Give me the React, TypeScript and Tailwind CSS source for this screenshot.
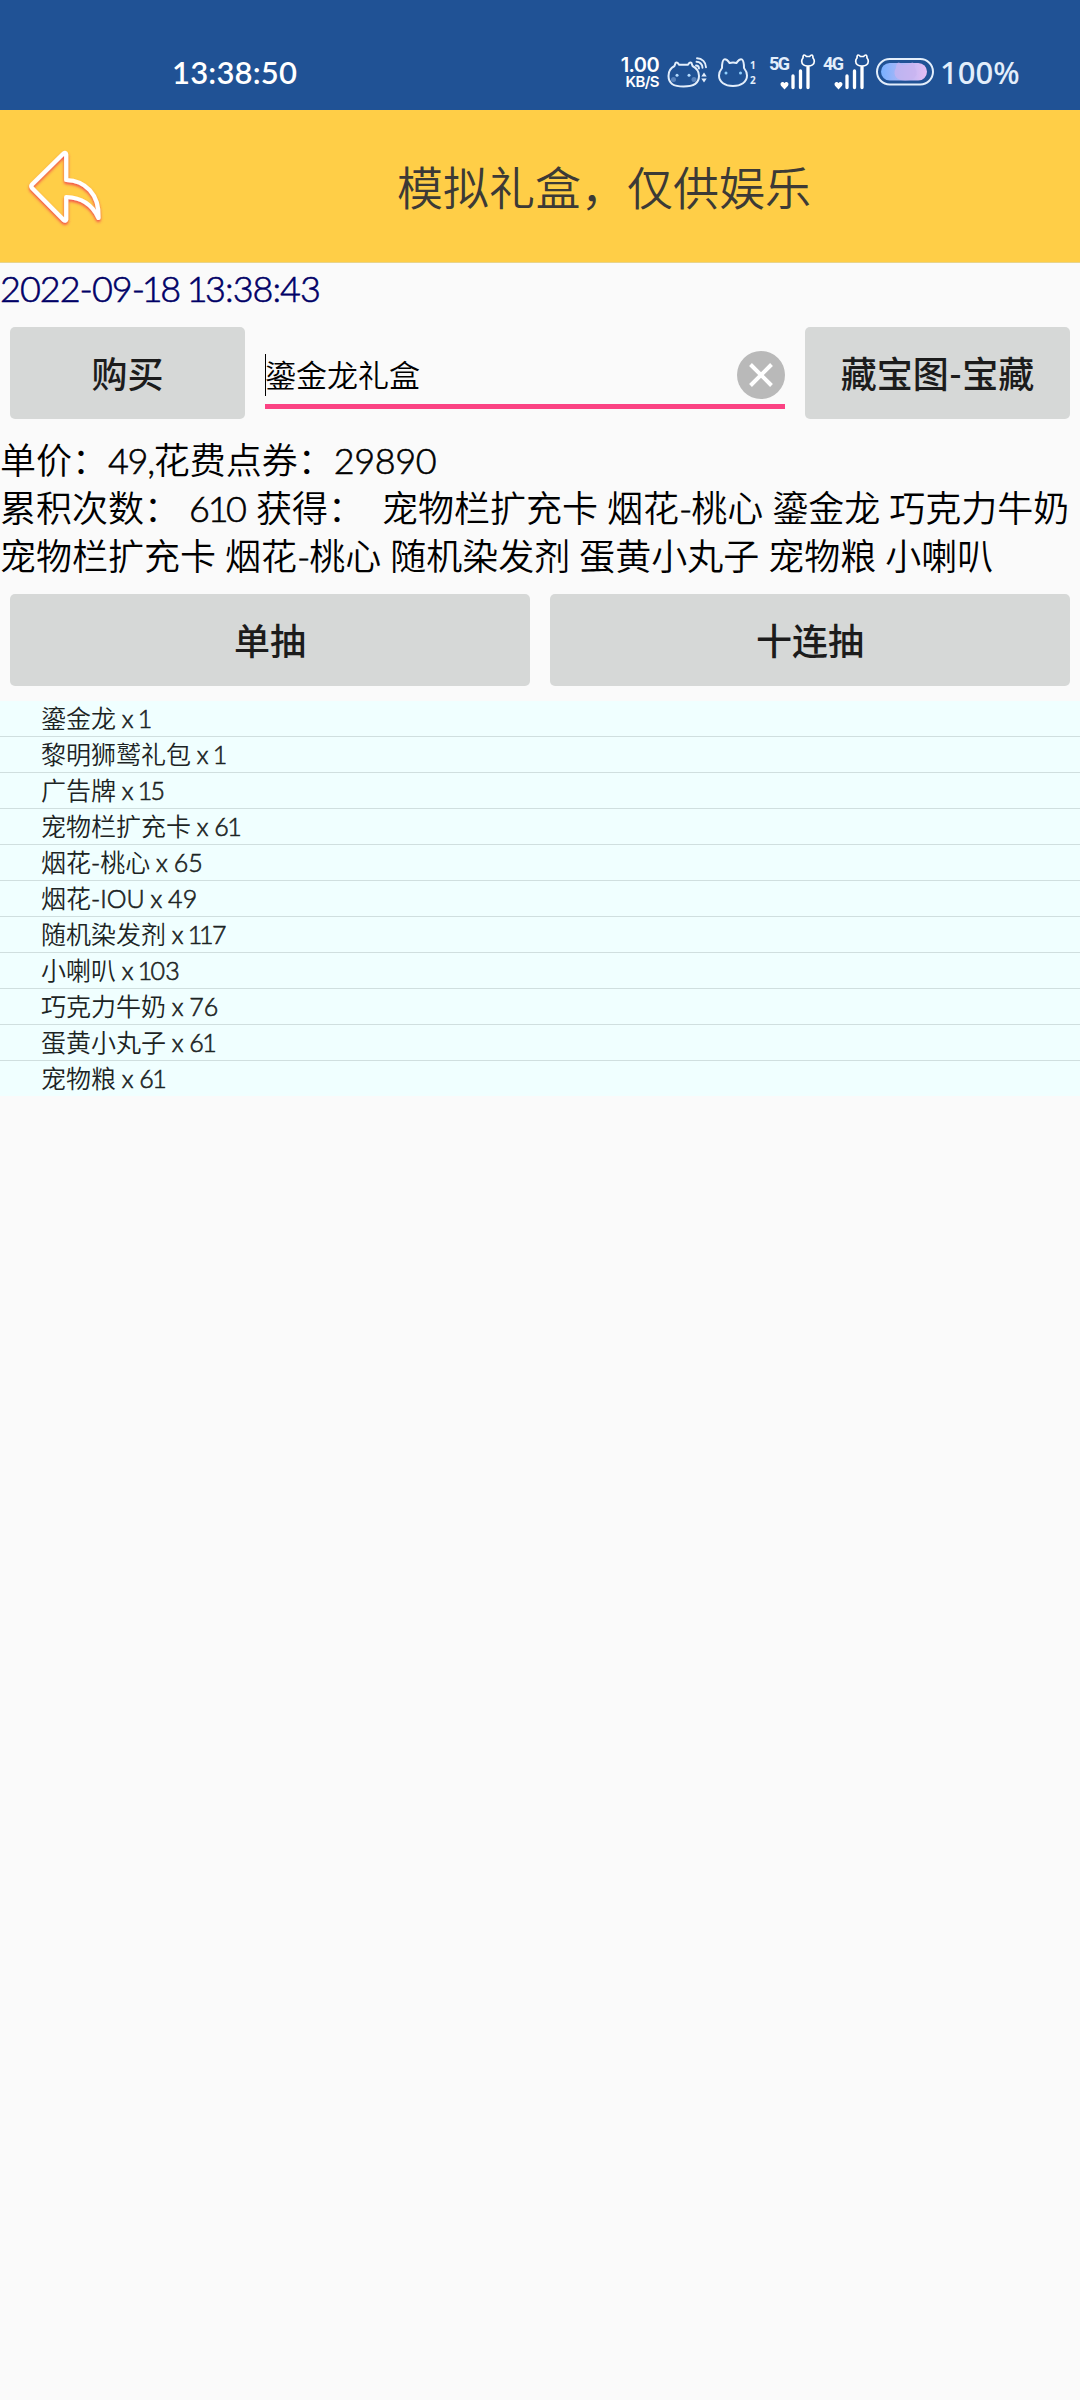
const items = [
  { name: '鎏金龙', count: 1 },
  { name: '黎明狮鹫礼包', count: 1 },
  { name: '广告牌', count: 15 },
  { name: '宠物栏扩充卡', count: 61 },
  { name: '烟花-桃心', count: 65 },
  { name: '烟花-IOU', count: 49 },
  { name: '随机染发剂', count: 117 },
  { name: '小喇叭', count: 103 },
  { name: '巧克力牛奶', count: 76 },
  { name: '蛋黄小丸子', count: 61 },
  { name: '宠物粮', count: 61 },
];

/* Sets digits proportionally: every "1" takes less room than the other figures. */
function Num({ children }: { children: string | number }) {
  return (
    <span className="[-webkit-text-stroke:0.6px]">
      {String(children)
        .split('')
        .map((char, index) =>
          char === '1' ? (
            <span key={index} className="-ml-[0.06em] tracking-[-0.07em]">1</span>
          ) : (
            char
          ),
        )}
    </span>
  );
}

function BearIcon() {
  return (
    <svg className="ml-[7px] h-9 w-[42px] shrink-0" viewBox="0 0 42 36" fill="none" stroke="#e3eefb" strokeWidth="2" strokeLinecap="round" strokeLinejoin="round">
      <path d="M8.5 12 9.500 9q1.500-1.500 3.500 1.700h9q2-3.200 3.500-1.700l1 3C30.500 14 33 18 33 22c0 8-6 10.500-15.500 10.500S2.500 30 2.500 22c0-4 2-8 6-10Z" />
      <circle cx="11" cy="21.300" r="1.500" fill="#b5dcff" stroke="none" />
      <circle cx="23" cy="21.300" r="1.500" fill="#b5dcff" stroke="none" />
      <circle cx="7.500" cy="25.500" r="2.500" fill="#7ea3d6" stroke="none" opacity="0.600" />
      <circle cx="28" cy="25.500" r="2.500" fill="#7ea3d6" stroke="none" opacity="0.600" />
      <path d="M31 4.200c5 0 9 4 9 9M30.500 7.800c3.400 0 6 2.600 6 6M30 11.500c1.800 0 3 1.200 3 3" strokeWidth="1.900" />
      <path d="m38 18.500 2.700 4h-5.400zM38 28.500l2.700-4h-5.400z" fill="#e3eefb" stroke="none" />
    </svg>
  );
}

function CatSimIcon() {
  return (
    <svg className="ml-[9px] h-9 w-[32px] shrink-0" viewBox="0 0 32 36" fill="none" stroke="#e3eefb" strokeWidth="2" strokeLinejoin="round">
      <path d="M5 14c0-4 .5-7.500 2-8.500s4 1 5.500 3.500c2-.7 5-.7 7 0 1.500-2.500 4-4.500 5.500-3.500S27 10 27 14c2 2.500 3 5 3 7.500C30 28 24 32 16 32S2 28 2 21.500c0-2.500 1-5 3-7.500Z" />
      <circle cx="9" cy="19" r="1.500" fill="#8fd0ff" stroke="none" />
      <circle cx="23.500" cy="19" r="1.500" fill="#8fd0ff" stroke="none" />
    </svg>
  );
}

function SignalIcon() {
  return (
    <svg className="ml-[-8px] h-9 w-[36px] shrink-0" viewBox="0 0 36 36" fill="none" stroke="#fff" strokeLinecap="round" strokeLinejoin="round">
      <path d="M4.500 35.500 1 31.800C0 30.300.6 28 2.400 28c.9 0 1.700.4 2.100 1.100.4-.7 1.200-1.100 2.100-1.100 1.800 0 2.400 2.300 1.400 3.800Z" fill="#fff" stroke="none" />
      <path d="M13 22v11.500M20.500 17v16.500M28 13v20.500" strokeWidth="3.300" />
      <path d="M23 4c0-2 .4-3 1.200-3s1.600.7 2.200 1.500h3.200C30.200 1.700 31 1 31.800 1S33 2 33 4c1 1 1.300 2 1.300 3.200 0 3-2.800 4.800-6.300 4.800s-6.300-1.800-6.300-4.800C21.700 6 22 5 23 4Z" fill="#205295" strokeWidth="1.700" />
    </svg>
  );
}

function BatteryIcon() {
  return (
    <svg className="ml-[6px] h-9 w-[58px] shrink-0" viewBox="0 0 58 36" fill="none">
      <defs>
        <linearGradient id="charge" x1="0" x2="1" y1="0" y2="0">
          <stop offset="0" stopColor="#78b0ff" />
          <stop offset="0.500" stopColor="#b3b8f5" />
          <stop offset="1" stopColor="#e6bdf3" />
        </linearGradient>
      </defs>
      <rect x="1" y="5" width="56" height="25.500" rx="12.700" stroke="#e3eefb" strokeWidth="2" />
      <rect x="5" y="9" width="46" height="17.500" rx="8.700" fill="url(#charge)" />
      <path d="M20 14c0-3 1-5.500 2.500-5.500S25 10 26 11h7c1-1 2-2.500 3.500-2.500S39 11 39 14c1.200 1.500 1.500 3 1.500 5 0 4.500-4 7.500-11 7.500s-11-3-11-7.500c0-2 .3-3.500 1.500-5Z" fill="#c9b3ef" opacity="0.700" />
    </svg>
  );
}

function StatusBar() {
  return (
    <div className="flex h-[110px] items-start bg-[#205295] pt-[54px] text-[#e3eefb]">
      <div className="ml-[172px] w-[125px] whitespace-nowrap font-['Lato',sans-serif] text-[31px] font-semibold leading-9 tracking-[0.2px] text-white">13:38:50</div>
      <div className="ml-[320px] flex w-[42px] flex-col items-end pt-[2px] font-['Inter',sans-serif] font-semibold text-white">
        <span className="text-[20px] leading-[18px] tracking-[-0.6px]">1.00</span>
        <span className="text-[15px] leading-[15px] tracking-[-0.6px]">KB/S</span>
      </div>
      <BearIcon />
      <CatSimIcon />
      <div className="ml-px flex w-[6px] flex-col pt-[4px] font-['Open_Sans',sans-serif] text-[10px] font-bold leading-[15px]">
        <span>1</span>
        <span>2</span>
      </div>
      <div className="ml-[13px] w-[19px] font-['Roboto',sans-serif] text-[18px] font-bold leading-[19px] tracking-[-1.5px]">5G</div>
      <SignalIcon />
      <div className="ml-[7px] w-[19px] font-['Roboto',sans-serif] text-[18px] font-bold leading-[19px] tracking-[-1.5px]">4G</div>
      <SignalIcon />
      <BatteryIcon />
      <div className="ml-[6px] font-['Noto_Sans',sans-serif] text-[31px] font-medium leading-9">100%</div>
    </div>
  );
}

function Header() {
  return (
    <header className="flex h-[153px] items-center border-b border-[#e8d48c] bg-[#ffce47]">
      <svg className="ml-[22px] h-[90px] w-[84px] shrink-0" viewBox="21 140 84 90" fill="none" strokeLinejoin="round" strokeLinecap="round">
        <defs>
          <filter id="glow" x="-20%" y="-20%" width="140%" height="150%">
            <feDropShadow dx="0" dy="2" stdDeviation="1.500" floodColor="#f0384e" floodOpacity="0.900" />
          </filter>
        </defs>
        <path d="M65.200 153.500V179C84 179.500 98.500 193 97.500 217 91 203 81 196.500 65.200 196V218.500q-.5 2-2.500.5L31 187q-1.500-2 0-3.500L62.500 152.500q2.300-1.500 2.700 1Z" stroke="#fff" strokeWidth="4.200" filter="url(#glow)" />
      </svg>
      <h1 className="ml-[291px] mt-[3px] text-[46px] leading-none text-[#3c3a36]">模拟礼盒，仅供娱乐</h1>
    </header>
  );
}

const buttonClass = 'h-[92px] rounded-[5px] bg-[#d6d8d7] pt-[2px] text-[36px] font-medium text-[#1c1c1c]';

export default function App() {
  return (
    <div className="min-h-[2400px] w-[1080px] bg-[#fafafa] font-['Lato','Noto_Sans_CJK_SC',sans-serif] font-[350] text-black">
      <StatusBar />
      <Header />
      <div className="h-[54px] whitespace-nowrap text-[36px] leading-[51px] tracking-[-1px] text-[#000066]">
        <Num>2022-09-18 13:38:43</Num>
      </div>
      <div className="mt-[10px] flex gap-5 px-[10px]">
        <button className={`${buttonClass} w-[235px]`}>购买</button>
        <div className="flex h-[82px] w-[520px] items-center border-b-[5px] border-[#fb4283] pt-[19px]">
          <div className="flex h-[42px] flex-1 items-center border-l border-black pt-px text-[31px]">
            <span className="-ml-px">鎏金龙礼盒</span>
          </div>
          <svg className="h-12 w-12" viewBox="0 0 48 48">
            <circle cx="24" cy="24" r="24" fill="#b9b9b9" />
            <path d="m13.500 13.500 21 21m0-21-21 21" stroke="#fff" strokeWidth="4" />
          </svg>
        </div>
        <button className={`${buttonClass} w-[265px]`}>藏宝图-宝藏</button>
      </div>
      <div className="mt-[17px] whitespace-pre text-[36px] leading-[48px] [word-spacing:-0.8px]">
        <p>单价：<span className="tracking-[-1.3px]"><Num>49,</Num></span>花费点券：<span className="tracking-[-0.4px]"><Num>29890</Num></span></p>
        <p>累积次数： <Num>610</Num> 获得：  宠物栏扩充卡 烟花<span className="tracking-[-1px]"><Num>-</Num></span>桃心 鎏金龙 巧克力牛奶</p>
        <p>宠物栏扩充卡 烟花<span className="tracking-[-1px]"><Num>-</Num></span>桃心 随机染发剂 蛋黄小丸子 宠物粮 小喇叭</p>
      </div>
      <div className="mt-[14px] grid grid-cols-2 gap-5 px-[10px]">
        <button className={buttonClass}>单抽</button>
        <button className={buttonClass}>十连抽</button>
      </div>
      <ul className="mt-[15px] bg-[#f0ffff]">
        {items.map(({ name, count }) => {
          const [title, suffix] = name.split('-');
          return (
            <li key={name} className="h-9 border-b border-[#d0dfdf] pl-[41px] text-[25px] leading-[35px] text-[#1c2424] [word-spacing:-1px] last:h-[35px] last:border-b-0">
              {title}
              {suffix === 'IOU' ? <Num>-IOU</Num> : suffix && <><Num>-</Num>{suffix}</>}
              <Num>{` x ${count}`}</Num>
            </li>
          );
        })}
      </ul>
    </div>
  );
}
